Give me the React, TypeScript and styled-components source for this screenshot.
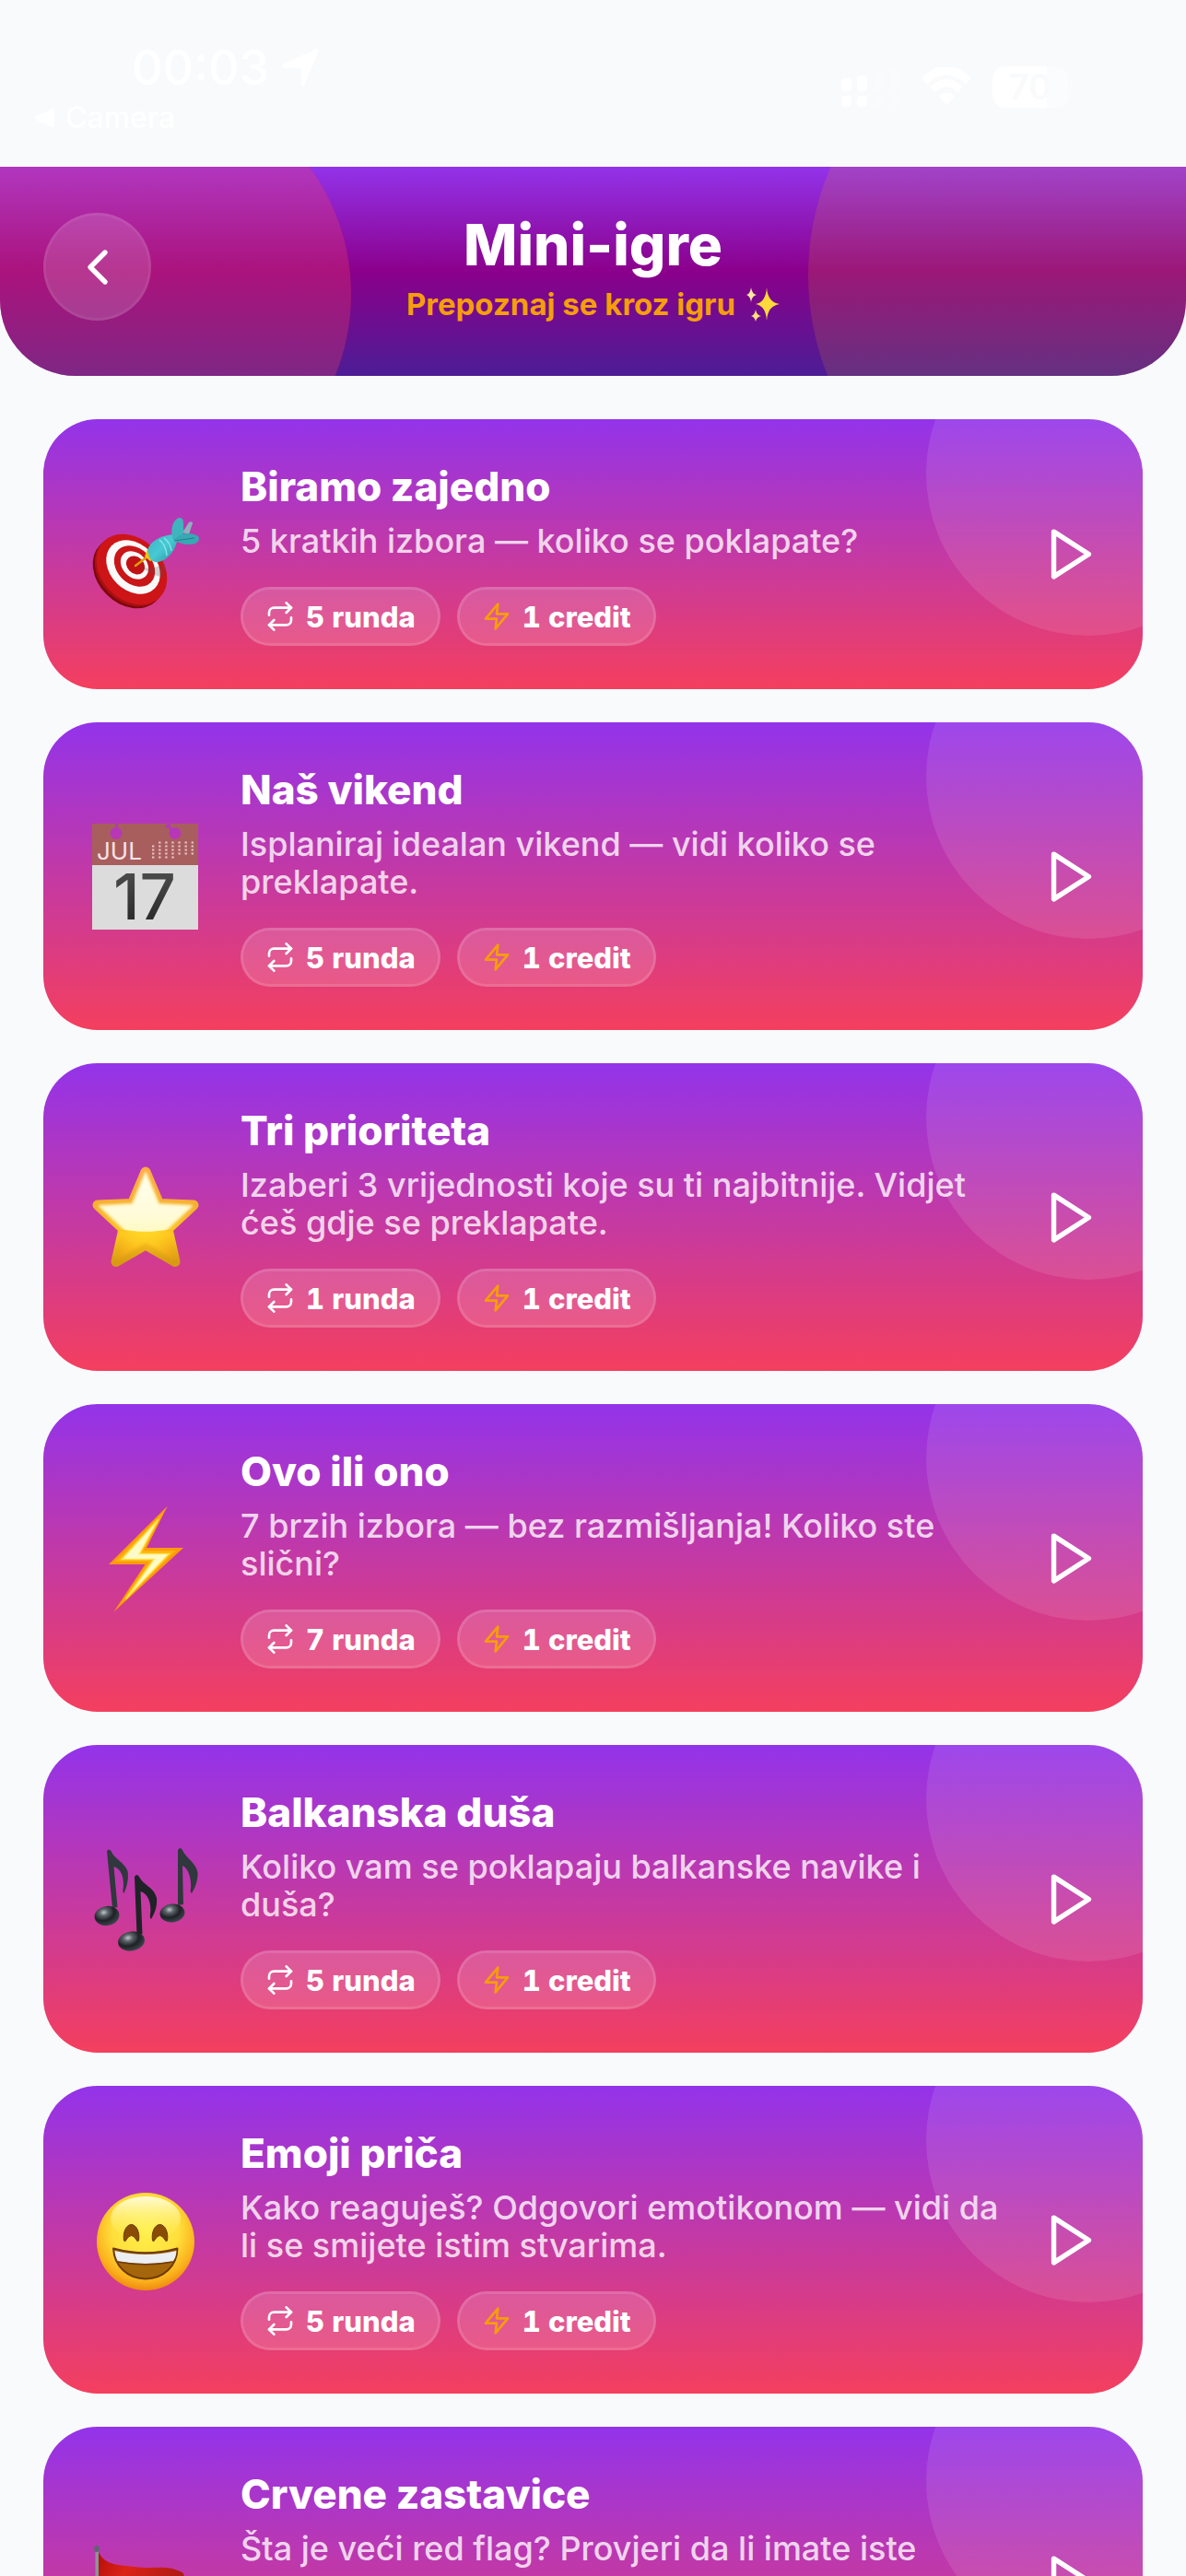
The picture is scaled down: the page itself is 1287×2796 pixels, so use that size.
import React from 'react';
import styled, { createGlobalStyle } from 'styled-components';
import { FiChevronLeft, FiPlay, FiRepeat, FiZap } from 'react-icons/fi';

const GlobalStyle = createGlobalStyle`
  * {
    box-sizing: border-box;
  }

  body {
    margin: 0;
    background: #f9fafc;
    font-family: Inter, "Liberation Sans", sans-serif;
  }

  h1, h2, p, ul {
    margin: 0;
    padding: 0;
  }
`;

const Screen = styled.div`
  display: flex;
  flex-direction: column;
  height: 100vh;
  background: #f9fafc;
`;

const StatusBar = styled.div`
  display: flex;
  justify-content: space-between;
  flex: none;
  height: 181px;
  padding: 42px 122px 0 38px;
  color: #ffffff;
`;

const StatusLeft = styled.div`
  display: flex;
  flex-direction: column;
`;

const Clock = styled.div`
  display: flex;
  align-items: center;
  gap: 12px;
  padding-left: 105px;
  font-size: 52px;
  font-weight: 500;
  line-height: 64px;
`;

const BackToApp = styled.div`
  display: flex;
  align-items: center;
  gap: 12px;
  font-size: 32px;
  font-weight: 500;
  line-height: 44px;
`;

const StatusRight = styled.div`
  display: flex;
  align-items: center;
  gap: 22px;
  height: 104px;
`;

const Header = styled.header`
  position: relative;
  display: grid;
  grid-template-columns: 117px 1fr 117px;
  align-items: center;
  flex: none;
  padding: 47px 47px 57px;
  overflow: hidden;
  border-radius: 0 0 82px 82px;
  background: linear-gradient(#9333ea, #8b008b 50%, #4c1d95);
`;

const PinkCircle = styled.span`
  position: absolute;
  left: -88px;
  bottom: -146px;
  width: 469px;
  height: 469px;
  border-radius: 50%;
  background: rgba(244, 63, 94, 0.3);
`;

const AmberCircle = styled.span`
  position: absolute;
  right: -177px;
  top: -176px;
  width: 587px;
  height: 587px;
  border-radius: 50%;
  background: rgba(245, 158, 11, 0.15);
`;

const BackButton = styled.button`
  position: relative;
  display: flex;
  align-items: center;
  justify-content: center;
  width: 117px;
  height: 117px;
  padding: 0;
  border: 3px solid rgba(255, 255, 255, 0.2);
  border-radius: 50%;
  background: rgba(255, 255, 255, 0.15);
  background-clip: padding-box;
  color: #ffffff;
  cursor: pointer;
`;

const HeaderText = styled.div`
  position: relative;
  display: flex;
  flex-direction: column;
  align-items: center;
  gap: 5px;
`;

const Title = styled.h1`
  color: #ffffff;
  font-size: 62px;
  font-weight: 800;
  line-height: 76px;
`;

const Subtitle = styled.p`
  display: flex;
  align-items: center;
  gap: 12px;
  color: #f59e0b;
  font-size: 33px;
  font-weight: 700;
  line-height: 42px;
`;

const GameList = styled.main`
  display: flex;
  flex-direction: column;
  flex: 1;
  gap: 36px;
  min-height: 0;
  padding: 47px;
  overflow-y: auto;
  scrollbar-width: none;
`;

const Card = styled.article`
  position: relative;
  display: flex;
  align-items: center;
  flex: none;
  gap: 45px;
  padding: 47px 45px 47px 53px;
  overflow: hidden;
  border-radius: 59px;
  background: linear-gradient(#9333ea, #f43f5e);
`;

const CardGlow = styled.span`
  position: absolute;
  top: -117px;
  right: -117px;
  width: 352px;
  height: 352px;
  border-radius: 50%;
  background: rgba(255, 255, 255, 0.1);
`;

const EmojiBox = styled.div`
  flex: none;
  width: 116px;
  height: 116px;

  svg {
    display: block;
    overflow: visible;
  }
`;

const CardBody = styled.div`
  position: relative;
  flex: 1;
  min-width: 0;
`;

const CardTitle = styled.h2`
  color: #ffffff;
  font-size: 44px;
  font-weight: 800;
  line-height: 52px;
`;

const CardText = styled.p`
  margin-top: 13px;
  color: rgba(255, 255, 255, 0.8);
  font-size: 36px;
  font-weight: 500;
  line-height: 41px;
  white-space: pre-line;
`;

const Chips = styled.ul`
  display: flex;
  gap: 18px;
  margin-top: 29px;
  list-style: none;
`;

const Chip = styled.li<{ $iconColor: string }>`
  display: flex;
  align-items: center;
  gap: 12px;
  height: 64px;
  padding: 0 24px;
  border: 3px solid rgba(255, 255, 255, 0.25);
  border-radius: 32px;
  background: rgba(255, 255, 255, 0.15);
  background-clip: padding-box;
  color: #ffffff;
  font-size: 31px;
  font-weight: 800;
  font-variant-numeric: tabular-nums;

  svg {
    color: ${({ $iconColor }) => $iconColor};
  }
`;

const PlayButton = styled.button`
  position: relative;
  flex: none;
  display: flex;
  padding: 0;
  border: 0;
  background: none;
  color: #ffffff;
  cursor: pointer;
`;

const TargetEmoji = () => (
  <svg width="116" height="116" viewBox="0 0 116 116" aria-hidden="true">
    <defs>
      <linearGradient id="dart" x1="0" y1="0" x2="1" y2="1">
        <stop offset="0" stopColor="#3bb3c0" />
        <stop offset="0.5" stopColor="#48c9d4" />
        <stop offset="1" stopColor="#2a929e" />
      </linearGradient>
    </defs>
    <g>
      <ellipse cx="39" cy="78" rx="43" ry="33" transform="rotate(45 39 78)" fill="#7d0709" />
      <ellipse cx="41" cy="76" rx="43" ry="33" transform="rotate(45 41 76)" fill="#a90f12" />
      <ellipse cx="43" cy="74" rx="43" ry="33" transform="rotate(45 43 74)" fill="#cd1518" />
      <ellipse cx="44.5" cy="71.5" rx="33" ry="25" transform="rotate(45 44.5 71.5)" fill="#fafafa" />
      <ellipse cx="46" cy="70.5" rx="25" ry="19" transform="rotate(45 46 70.5)" fill="#c91619" />
      <ellipse cx="46" cy="69.5" rx="17" ry="13" transform="rotate(45 46 69.5)" fill="#fafafa" />
      <ellipse cx="47" cy="69.5" rx="11" ry="9" transform="rotate(45 47 69.5)" fill="#c01215" />
    </g>
    <path d="M50 71C59 73 69 73 79 68L78 82C74 84 62 77 50 71Z" fill="#555" opacity="0.25" />
    <path d="M98 34L105 23Q109 21 109 24L105 36Z" fill="#8fb0bd" />
    <path d="M47 70L59 61" stroke="#d9a309" strokeWidth="2.4" strokeLinecap="round" />
    <path d="M57 60L60 52L71 62L63 65Z" fill="#f2c40e" />
    <path d="M60 53C63 44 72 38 87 36L92 44C89 56 81 64 72 66Q65 67 62 61Z" fill="url(#dart)" />
    <path d="M73 42Q80 47 81 59M78 40Q85 45 86 54" stroke="#7de3e8" strokeWidth="1.6" fill="none" />
    <path d="M88 42C84 32 87 21 94 18Q99 17 99 24L99 35L92 43Z" fill="#3fb4bd" />
    <path d="M89 42C95 34 107 33 115 38Q118 42 112 46C105 48 96 47 89 42Z" fill="#36a9b4" />
    <path d="M89 43L111 40" stroke="#247f8a" strokeWidth="1" />
  </svg>
);

const CalendarEmoji = () => (
  <svg width="116" height="116" viewBox="0 0 116 116" aria-hidden="true">
    <defs>
      <mask id="holes">
        <rect width="116" height="116" fill="#fff" />
        <circle cx="26" cy="11.5" r="6.5" fill="#000" />
        <circle cx="90" cy="11.5" r="6.5" fill="#000" />
        <path d="M26.500 10V0M88 9Q83 6 83 0M79 4H83" stroke="#000" strokeWidth="3" fill="none" />
      </mask>
      <linearGradient id="digits" x1="0" y1="0" x2="0" y2="1">
        <stop offset="0" stopColor="#555" />
        <stop offset="1" stopColor="#222" />
      </linearGradient>
    </defs>
    <rect y="45" width="115" height="71" fill="#dcdcdc" />
    <rect y="1" width="115" height="45" fill="#a95e5e" mask="url(#holes)" />
    <text x="5" y="40" fontSize="26" fill="#f6e3e6" fontFamily="Inter, sans-serif">JUL</text>
    <g stroke="#e6c3c7" strokeWidth="2" strokeDasharray="2.4 4.700">
      <path d="M72.100 21.500H111" />
      <path d="M65 25.500H111" />
      <path d="M65 29.500H111" />
      <path d="M65 33.500H111" />
      <path d="M65 37.500H90" />
    </g>
    <text x="57" y="105" fontSize="69" fontWeight="500" fill="url(#digits)" textAnchor="middle" fontFamily="Inter, sans-serif">17</text>
  </svg>
);

const StarEmoji = () => (
  <svg width="116" height="116" viewBox="0 0 116 116" aria-hidden="true">
    <defs>
      <linearGradient id="starBody" x1="0" y1="0" x2="0" y2="1">
        <stop offset="0" stopColor="#ffab45" />
        <stop offset="0.4" stopColor="#f5b02e" />
        <stop offset="0.7" stopColor="#ffc81f" />
        <stop offset="1" stopColor="#d99a13" />
      </linearGradient>
      <radialGradient id="starFill" cx="0.5" cy="0.55" r="0.5">
        <stop offset="0" stopColor="#ffe532" />
        <stop offset="0.6" stopColor="#fdc820" />
        <stop offset="1" stopColor="#f2a516" />
      </radialGradient>
      <linearGradient id="starShine" x1="0" y1="0" x2="0" y2="1">
        <stop offset="0" stopColor="#fffff0" />
        <stop offset="0.5" stopColor="#fffbd8" />
        <stop offset="1" stopColor="#fff6a0" />
      </linearGradient>
      <clipPath id="starTop">
        <path d="M0 0H116V55C98 80 18 80 0 55Z" />
      </clipPath>
      <filter id="starSoft" x="-10%" y="-10%" width="120%" height="120%">
        <feGaussianBlur stdDeviation="1.6" />
      </filter>
    </defs>
    <path
      d="M58 9L72.500 43.500L110 45L82 71L90 106.500L58 88L26 106.500L34 71L6 45L43.500 43.500Z"
      fill="url(#starBody)"
      stroke="url(#starBody)"
      strokeWidth="11"
      strokeLinejoin="round"
    />
    <path
      d="M58 12L72 46L105 48L80 71L87 102L58 86L29 102L36 71L11 48L44 46Z"
      fill="url(#starFill)"
      filter="url(#starSoft)"
    />
    <g clipPath="url(#starTop)">
      <path
        d="M58 10L72 44L108 46L80 72L87 102L58 86L29 102L36 72L8 46L44 44Z"
        fill="url(#starShine)"
        stroke="#fff8c8"
        strokeWidth="2"
        strokeLinejoin="round"
        filter="url(#starSoft)"
      />
    </g>
  </svg>
);

const BoltEmoji = () => (
  <svg width="116" height="116" viewBox="0 0 116 116" aria-hidden="true">
    <path d="M81.700 1.700L59 47H99L23.500 116.500L57.500 65H18Z" fill="#fd9a0c" />
    <path d="M77 9L55.500 50H91L31 108L62 62H25Z" fill="#ffb20f" />
    <path d="M72 16L51.500 53.500H83.500L36.500 102.500L67 59.500H32Z" fill="#fffbc8" stroke="#ffe24a" strokeWidth="1.500" />
  </svg>
);

const NotesEmoji = () => (
  <svg width="116" height="116" viewBox="0 0 116 116" aria-hidden="true">
    <defs>
      <radialGradient id="noteHead" cx="0.4" cy="0.3" r="0.7">
        <stop offset="0" stopColor="#c2c6ca" />
        <stop offset="0.25" stopColor="#5c646a" />
        <stop offset="0.6" stopColor="#1e2125" />
        <stop offset="1" stopColor="#3b454c" />
      </radialGradient>
    </defs>
    <g fill="#30373d">
      <path d="M16 6Q18 3 20.500 6C23 14 35 18 38.500 28C40 37 37 47 34.500 52Q33 51 33.500 48C35 38 33 26 23.500 23L27.500 67L22 68Z" />
      <path d="M46 34Q48.500 30 51 34C55 43 67 45 70 57C71 67 67 75 64 80Q62 78 63 75C65 62 60 52 52.500 50L54.500 96L48.500 97Z" fill="#1f2226" />
      <path d="M93 5Q95.500 1 98 5C101 13 112 18 114.500 29C115 39 111 47 108 52Q106 50 107 47C108 36 104 24 98 22L99 64L93 65Z" />
    </g>
    <ellipse cx="16" cy="76.500" rx="13.500" ry="10.500" transform="rotate(-10 16 76.500)" fill="url(#noteHead)" />
    <ellipse cx="42.500" cy="104" rx="14.500" ry="10.500" transform="rotate(-10 42.500 104)" fill="url(#noteHead)" />
    <ellipse cx="87" cy="73.500" rx="13.500" ry="10" transform="rotate(-6 87 73.500)" fill="url(#noteHead)" />
  </svg>
);

const GrinEmoji = () => (
  <svg width="116" height="116" viewBox="0 0 116 116" aria-hidden="true">
    <defs>
      <radialGradient id="face" cx="0.5" cy="0.38" r="0.62">
        <stop offset="0" stopColor="#fff04a" />
        <stop offset="0.55" stopColor="#ffdf3c" />
        <stop offset="0.85" stopColor="#fbb01c" />
        <stop offset="1" stopColor="#ee8a10" />
      </radialGradient>
      <linearGradient id="faceShine" x1="0" y1="0" x2="0" y2="1">
        <stop offset="0" stopColor="#fffde0" stopOpacity="0.95" />
        <stop offset="1" stopColor="#fff25a" stopOpacity="0" />
      </linearGradient>
    </defs>
    <circle cx="58" cy="60" r="53" fill="url(#face)" />
    <ellipse cx="58" cy="35" rx="38" ry="24" fill="url(#faceShine)" />
    <g fill="#8a4b06" stroke="#6d3a04" strokeWidth="1">
      <path d="M34.500 59C33 50 37 41.500 42.500 41.500S52 50 50.500 59Q49 61 48 58Q42.500 49 37 58Q36 61 34.500 59Z" />
      <path d="M65.500 59C64 50 68 41.500 73.500 41.500S83 50 81.500 59Q80 61 79 58Q73.500 49 68 58Q67 61 65.500 59Z" />
    </g>
    <path d="M23 67.500Q58 77 92.500 67.500C92 87 77 100.500 58 100.500S24 87 23 67.500Z" fill="#a5650a" stroke="#6d3a04" strokeWidth="2" strokeLinejoin="round" />
    <path d="M24.500 70Q58 78 91.500 70Q91 78 87.500 81.500Q58 87 28 81.500Q25 77 24.500 70Z" fill="#eceef2" />
    <path d="M28 82Q58 87.500 87.500 82" stroke="#6d3a04" strokeWidth="1.500" fill="none" />
  </svg>
);

const FlagEmoji = () => (
  <svg width="116" height="116" viewBox="0 0 116 116" aria-hidden="true">
    <defs>
      <linearGradient id="flag" x1="0" y1="0" x2="1" y2="0.3">
        <stop offset="0" stopColor="#b50f0b" />
        <stop offset="0.35" stopColor="#dc2318" />
        <stop offset="1" stopColor="#a81a12" />
      </linearGradient>
    </defs>
    <path d="M7 27C14 42 30 41 46 43C70 46 82 40 99 50L108 90C80 78 50 98 7 84Z" fill="url(#flag)" />
    <rect x="3.500" y="24" width="3.500" height="92" fill="#8d949b" />
    <ellipse cx="5" cy="23.500" rx="2.800" ry="3.500" fill="#5c6570" />
  </svg>
);

const Sparkles = () => (
  <svg width="36" height="38" viewBox="0 0 36 38" aria-hidden="true">
    <path d="M22 1Q23 17 36 19Q23 21 22 37Q21 21 10 19Q21 17 22 1Z" fill="#ffd93b" />
    <path d="M5 1Q6 8 11 9Q6 10 5 17Q4 10 0 9Q4 8 5 1Z" fill="#ffe9a0" />
    <path d="M10 25Q11 31 16 32Q11 33 10 38Q9 33 5 32Q9 31 10 25Z" fill="#ffe07a" />
  </svg>
);

const LocationArrow = () => (
  <svg width="42" height="44" viewBox="0 0 42 44" aria-hidden="true">
    <path d="M39 1Q42 1 41 5L26 41Q24 44 23 40V24Q23 22 21 22H4Q0 21 3 18Z" fill="#fff" />
  </svg>
);

const SignalIcon = () => (
  <svg width="64" height="44" viewBox="0 0 64 44" fill="#fff" aria-hidden="true">
    <rect y="13" width="11" height="14" rx="4" />
    <rect x="17" y="10" width="11" height="17" rx="4" />
    <rect x="35" y="6" width="10" height="21" rx="4" opacity="0.2" />
    <rect x="53" y="1" width="10" height="26" rx="4" opacity="0.2" />
    <rect y="32" width="11" height="12" rx="4" />
    <rect x="17" y="32" width="11" height="12" rx="4" />
    <rect x="35" y="32" width="10" height="12" rx="4" opacity="0.2" />
    <rect x="53" y="32" width="10" height="12" rx="4" opacity="0.2" />
  </svg>
);

const WifiIcon = () => (
  <svg width="56" height="42" viewBox="0 0 56 42" fill="none" stroke="#fff" aria-hidden="true">
    <path d="M4 15Q28 -8 52 15" strokeWidth="9" />
    <path d="M13 24Q28 10 43 24" strokeWidth="8" />
    <path d="M19 31Q28 24 37 31L28 41Z" fill="#fff" stroke="none" />
  </svg>
);

const BatteryIcon = () => (
  <svg width="88" height="45" viewBox="0 0 88 45" aria-hidden="true">
    <defs>
      <clipPath id="battery">
        <rect width="83" height="45" rx="14" />
      </clipPath>
    </defs>
    <g clipPath="url(#battery)">
      <rect width="83" height="45" fill="#fff" opacity="0.4" />
      <rect width="59" height="45" fill="#fff" />
    </g>
    <path d="M85 15Q89 22 85 30Z" fill="#fff" opacity="0.4" />
    <text x="41" y="36" fontSize="38" fontWeight="600" textAnchor="middle" fill="#f9fafc" fontFamily="Inter, sans-serif">70</text>
  </svg>
);

interface Game {
  title: string;
  text: string;
  rounds: number;
  emoji: React.ReactNode;
}

const games: Game[] = [
  { title: 'Biramo zajedno', text: '5 kratkih izbora — koliko se poklapate?', rounds: 5, emoji: <TargetEmoji /> },
  { title: 'Naš vikend', text: 'Isplaniraj idealan vikend — vidi koliko se\npreklapate.', rounds: 5, emoji: <CalendarEmoji /> },
  { title: 'Tri prioriteta', text: 'Izaberi 3 vrijednosti koje su ti najbitnije. Vidjet\nćeš gdje se preklapate.', rounds: 1, emoji: <StarEmoji /> },
  { title: 'Ovo ili ono', text: '7 brzih izbora — bez razmišljanja! Koliko ste\nslični?', rounds: 7, emoji: <BoltEmoji /> },
  { title: 'Balkanska duša', text: 'Koliko vam se poklapaju balkanske navike i\nduša?', rounds: 5, emoji: <NotesEmoji /> },
  { title: 'Emoji priča', text: 'Kako reaguješ? Odgovori emotikonom — vidi da\nli se smijete istim stvarima.', rounds: 5, emoji: <GrinEmoji /> },
  { title: 'Crvene zastavice', text: 'Šta je veći red flag? Provjeri da li imate iste\nnorme.', rounds: 5, emoji: <FlagEmoji /> },
];

const GameCard: React.FC<{ game: Game }> = ({ game }) => (
  <Card>
    <CardGlow />
    <EmojiBox>{game.emoji}</EmojiBox>
    <CardBody>
      <CardTitle>{game.title}</CardTitle>
      <CardText>{game.text}</CardText>
      <Chips>
        <Chip $iconColor="#ffffff">
          <FiRepeat size={32} />
          {game.rounds} runda
        </Chip>
        <Chip $iconColor="#f59e0b">
          <FiZap size={32} />
          1 credit
        </Chip>
      </Chips>
    </CardBody>
    <PlayButton aria-label={game.title}>
      <FiPlay size={65} />
    </PlayButton>
  </Card>
);

const App: React.FC = () => {
  return (
    <>
      <GlobalStyle />
      <Screen>
        <StatusBar>
          <StatusLeft>
            <Clock>
              00:03
              <LocationArrow />
            </Clock>
            <BackToApp>
              <svg width="21" height="20" viewBox="0 0 21 20" aria-hidden="true">
                <path d="M19 0Q21 0 21 2V18Q21 20 19 20L1 12Q-1 10 1 8Z" fill="#fff" />
              </svg>
              Camera
            </BackToApp>
          </StatusLeft>
          <StatusRight>
            <SignalIcon />
            <WifiIcon />
            <BatteryIcon />
          </StatusRight>
        </StatusBar>

        <Header>
          <PinkCircle />
          <AmberCircle />
          <BackButton aria-label="Nazad">
            <FiChevronLeft size={64} />
          </BackButton>
          <HeaderText>
            <Title>Mini-igre</Title>
            <Subtitle>
              Prepoznaj se kroz igru
              <Sparkles />
            </Subtitle>
          </HeaderText>
        </Header>

        <GameList>
          {games.map((game) => (
            <GameCard key={game.title} game={game} />
          ))}
        </GameList>
      </Screen>
    </>
  );
};

export default App;
